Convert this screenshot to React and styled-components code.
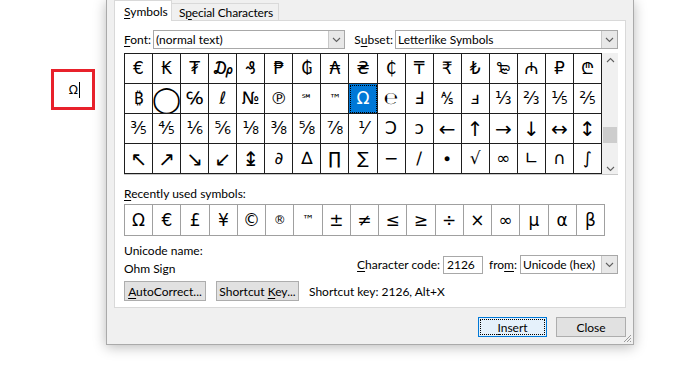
import React from 'react';
import styled, { createGlobalStyle, css } from 'styled-components';

const GlobalStyle = createGlobalStyle`
  html, body {
    margin: 0;
    padding: 0;
    background: #ffffff;
  }
  body {
    font-family: "Segoe UI", Lato, "Liberation Sans", sans-serif;
    font-size: 12px;
    color: #000;
    overflow: hidden;
  }
`;

const symbolRows = [
  ['€', '₭', '₮', '₯', '₰', '₱', '₲', '₳', '₴', '₵', '₸', '₹', '₺', '₻', '₼', '₽', '₾'],
  ['₿', '◯', '℅', 'ℓ', '№', '℗', '℠', '™', 'Ω', '℮', 'Ⅎ', '⅍', 'ⅎ', '⅓', '⅔', '⅕', '⅖'],
  ['⅗', '⅘', '⅙', '⅚', '⅛', '⅜', '⅝', '⅞', '⅟', 'Ↄ', 'ↄ', '←', '↑', '→', '↓', '↔', '↕'],
  ['↖', '↗', '↘', '↙', '↨', '∂', '∆', '∏', '∑', '−', '∕', '∙', '√', '∞', '∟', '∩', '∫'],
];

const recent = ['Ω', '€', '£', '¥', '©', '®', '™', '±', '≠', '≤', '≥', '÷', '×', '∞', 'µ', 'α', 'β'];

const arrows = '←↑→↓↔↕↖↗↘↙↨';

const Page = styled.div`
  display: flex;
  align-items: flex-start;
  width: 695px;
  height: 387px;
`;

const DocArea = styled.div`
  width: 106px;
  padding: 69px 0 0 51px;
  box-sizing: border-box;
`;

const RedBox = styled.div`
  width: 44px;
  height: 41px;
  box-sizing: border-box;
  border: 3px solid #e8212b;
  display: flex;
  align-items: center;
  justify-content: flex-end;
  padding-right: 12px;
  font-family: "Segoe UI", "DejaVu Sans", sans-serif;
  font-size: 12px;
`;

const Caret = styled.span`
  display: inline-block;
  width: 1px;
  height: 16px;
  background: #000;
  margin-left: 1px;
`;

const Dialog = styled.div`
  width: 528px;
  height: 345px;
  box-sizing: border-box;
  background: #f0f0f0;
  border: 1px solid #aaaaaa;
  border-top: none;
  box-shadow: 0 2px 12px rgba(0, 0, 0, 0.28);
  padding: 0 7px 0 7px;
  display: flex;
  flex-direction: column;
  position: relative;
`;

const TabStrip = styled.div`
  display: flex;
  align-items: flex-end;
  height: 20px;
  position: relative;
  z-index: 1;
`;

const Tab = styled.div`
  box-sizing: border-box;
  border: 1px solid #d9d9d9;
  border-bottom: none;
  display: flex;
  align-items: center;
  white-space: nowrap;
  ${p =>
    p.active
      ? css`
          width: 58px;
          height: 21px;
          padding-left: 9px;
          margin-bottom: -1px;
          background: #ffffff;
        `
      : css`
          height: 17px;
          padding: 0 5px 0 7px;
          letter-spacing: -0.15px;
          background: #f0f0f0;
          border-left: none;
        `}
`;

const Key = styled.span`
  text-decoration: underline;
  text-underline-offset: 2px;
`;

const Panel = styled.div`
  height: 288px;
  box-sizing: border-box;
  background: #ffffff;
  border: 1px solid #d9d9d9;
  padding: 9px 7px 0 9px;
  display: flex;
  flex-direction: column;
`;

const Row = styled.div`
  display: flex;
  align-items: center;
`;

const Label = styled.span`
  white-space: nowrap;
  margin-right: ${p => p.gap || 2}px;
  margin-left: ${p => p.lead || 0}px;
`;

const Select = styled.div`
  width: ${p => p.w}px;
  height: 19px;
  box-sizing: border-box;
  border: 1px solid #a8a8a8;
  background: #fff;
  display: flex;
  align-items: center;
  padding-left: 2px;
`;

const SelectText = styled.span`
  flex: 1;
  white-space: nowrap;
  overflow: hidden;
`;

const DropButton = styled.div`
  width: 16px;
  height: 17px;
  box-sizing: border-box;
  background: #e8e8e8;
  border-left: 1px solid #c8c8c8;
  display: flex;
  align-items: center;
  justify-content: center;
`;

const Chevron = ({ up }) => (
  <svg width="9" height="6" viewBox="0 0 9 6">
    <path
      d={up ? 'M1 5 L4.5 1.5 L8 5' : 'M1 1 L4.5 4.5 L8 1'}
      fill="none"
      stroke="#606060"
      strokeWidth="1.1"
    />
  </svg>
);

const GridWrap = styled.div`
  display: flex;
  margin-top: 4px;
  height: 121px;
  border-bottom: 1px solid #c8c8c8;
  width: 494px;
`;

const SymbolGrid = styled.div`
  display: grid;
  grid-template-columns: repeat(17, 1fr);
  grid-auto-rows: 30px;
  width: 478px;
  box-sizing: border-box;
  border-top: 1px solid ${p => p.line};
  border-left: 1px solid ${p => p.line};
`;

const Cell = styled.div`
  border-right: 1px solid ${p => p.line};
  border-bottom: 1px solid ${p => p.line};
  display: flex;
  align-items: center;
  justify-content: center;
  font-family: "DejaVu Sans", "Noto Sans", sans-serif;
  font-size: ${p => p.size || 17}px;
  line-height: 1;
  overflow: hidden;
  box-sizing: border-box;
  ${p =>
    p.selected &&
    css`
      background: #0078d7;
      color: #ffffff;
      outline: 1px dotted #000;
      outline-offset: -2px;
    `}
`;

const ScrollBar = styled.div`
  width: 16px;
  background: #f0f0f0;
  display: flex;
  flex-direction: column;
  align-items: center;
  justify-content: space-between;
  padding: 4px 0 2px;
  box-sizing: border-box;
  position: relative;
`;

const Thumb = styled.div`
  position: absolute;
  top: 74px;
  left: 1px;
  width: 14px;
  height: 16px;
  background: #cdcdcd;
`;

const SectionLabel = styled.div`
  margin-top: 11px;
  height: 16px;
  line-height: 16px;
`;

const RecentGrid = styled(SymbolGrid)`
  margin-top: 2px;
  width: 481px;
  grid-template-columns: repeat(17, 1fr);
  grid-auto-rows: 31px;
`;

const InfoRow = styled.div`
  display: flex;
  justify-content: space-between;
  margin-top: 6px;
`;

const InfoText = styled.div`
  line-height: 18px;
`;

const CodeArea = styled.div`
  display: flex;
  align-items: center;
  padding-top: 9px;
`;

const CodeInput = styled.div`
  width: 40px;
  height: 18px;
  box-sizing: border-box;
  border: 1px solid #a8a8a8;
  background: #fff;
  padding-left: 3px;
  line-height: 16px;
  margin-right: 6px;
`;

const ButtonRow = styled.div`
  display: flex;
  align-items: center;
  gap: 10px;
  margin-top: 3px;
`;

const Button = styled.div`
  width: ${p => p.w}px;
  height: 20px;
  box-sizing: border-box;
  border: 1px solid ${p => (p.primary ? '#0078d7' : '#adadad')};
  background: ${p => (p.primary ? '#e5f1fb' : '#e1e1e1')};
  display: flex;
  align-items: center;
  justify-content: center;
  white-space: nowrap;
  ${p =>
    p.primary &&
    css`
      outline: 1px dotted #000;
      outline-offset: -3px;
    `}
`;

const ShortcutText = styled.span`
  white-space: nowrap;
`;

const Footer = styled.div`
  display: flex;
  justify-content: flex-end;
  gap: 9px;
  margin-top: 9px;
`;

const Grip = styled.svg`
  position: absolute;
  right: 1px;
  bottom: 1px;
`;

const cellSize = s => {
  if (s === '◯') return 26;
  if (s === '℠' || s === '™' || s === '®') return 12;
  if (arrows.includes(s)) return 20;
  return 17;
};

export default function App() {
  return (
    <>
      <GlobalStyle />
      <Page>
        <DocArea>
          <RedBox>
            Ω<Caret />
          </RedBox>
        </DocArea>
        <Dialog>
          <TabStrip>
            <Tab active>
              <span>
                <Key>S</Key>ymbols
              </span>
            </Tab>
            <Tab>
              <span>
                S<Key>p</Key>ecial Characters
              </span>
            </Tab>
          </TabStrip>
          <Panel>
            <Row>
              <Label>
                <Key>F</Key>ont:
              </Label>
              <Select w={194}>
                <SelectText>(normal text)</SelectText>
                <DropButton>
                  <Chevron />
                </DropButton>
              </Select>
              <Label lead={9}>
                S<Key>u</Key>bset:
              </Label>
              <Select w={225}>
                <SelectText>Letterlike Symbols</SelectText>
                <DropButton>
                  <Chevron />
                </DropButton>
              </Select>
            </Row>
            <GridWrap>
              <SymbolGrid line="#1e1e1e">
                {symbolRows.map((row, r) =>
                  row.map((s, c) => (
                    <Cell
                      key={`${r}-${c}`}
                      line="#1e1e1e"
                      selected={r === 1 && c === 8}
                      size={cellSize(s)}
                    >
                      {s}
                    </Cell>
                  ))
                )}
              </SymbolGrid>
              <ScrollBar>
                <Chevron up />
                <Thumb />
                <Chevron />
              </ScrollBar>
            </GridWrap>
            <SectionLabel>
              <Key>R</Key>ecently used symbols:
            </SectionLabel>
            <RecentGrid line="#a0a0a0">
              {recent.map((s, i) => (
                <Cell key={i} line="#a0a0a0" size={cellSize(s)}>
                  {s}
                </Cell>
              ))}
            </RecentGrid>
            <InfoRow>
              <div>
                <InfoText>Unicode name:</InfoText>
                <InfoText>Ohm Sign</InfoText>
              </div>
              <CodeArea>
                <Label gap={3}>
                  <Key>C</Key>haracter code:
                </Label>
                <CodeInput>2126</CodeInput>
                <Label gap={3}>
                  fro<Key>m</Key>:
                </Label>
                <Select w={98}>
                  <SelectText>Unicode (hex)</SelectText>
                  <DropButton>
                    <Chevron />
                  </DropButton>
                </Select>
              </CodeArea>
            </InfoRow>
            <ButtonRow>
              <Button w={82}>
                <span>
                  <Key>A</Key>utoCorrect...
                </span>
              </Button>
              <Button w={83}>
                <span>
                  Shortcut <Key>K</Key>ey...
                </span>
              </Button>
              <ShortcutText>Shortcut key: 2126, Alt+X</ShortcutText>
            </ButtonRow>
          </Panel>
          <Footer>
            <Button w={69} primary>
              <span>
                <Key>I</Key>nsert
              </span>
            </Button>
            <Button w={70}>Close</Button>
          </Footer>
          <Grip width="10" height="10" viewBox="0 0 10 10">
            <path d="M9 2 L2 9 M9 5 L5 9 M9 8 L8 9" stroke="#9a9a9a" strokeWidth="1" />
          </Grip>
        </Dialog>
      </Page>
    </>
  );
}
